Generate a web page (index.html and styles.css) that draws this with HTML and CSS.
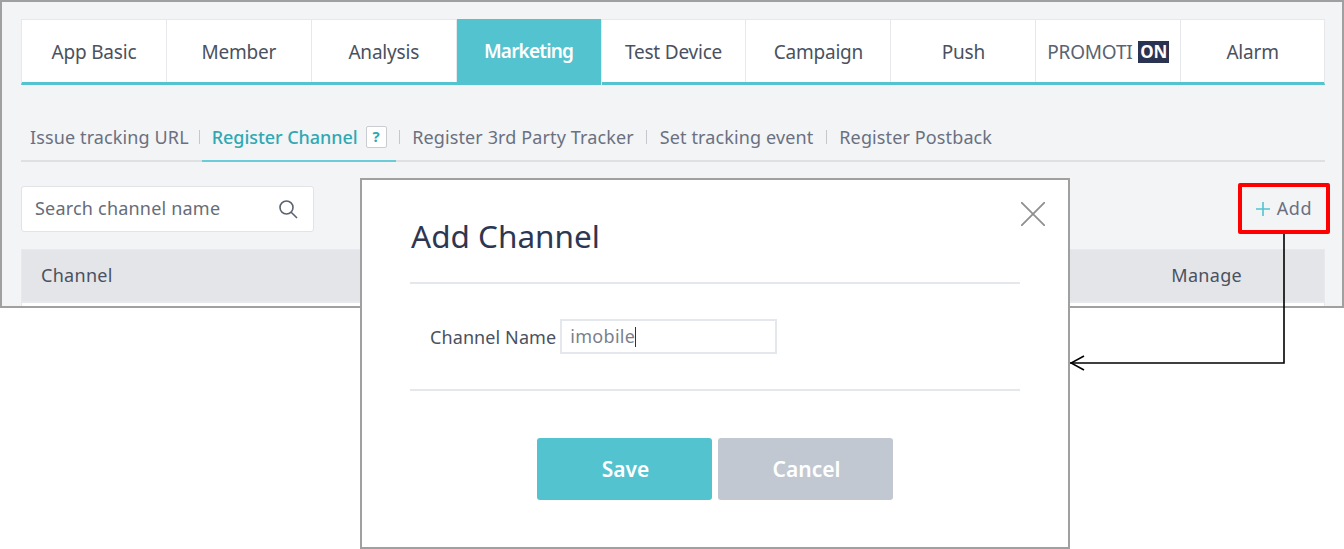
FILE: index.html
```html
<!DOCTYPE html>
<html lang="en">
<head>
    <meta charset="UTF-8">
    <title>Add Channel</title>
    <link rel="stylesheet" href="styles.css">
</head>
<body>
    <div class="shot">
        <ul class="tabs">
            <li>App Basic</li>
            <li>Member</li>
            <li>Analysis</li>
            <li class="on">Marketing</li>
            <li>Test Device</li>
            <li>Campaign</li>
            <li>Push</li>
            <li class="promo">PROMOTI <b>ON</b></li>
            <li>Alarm</li>
        </ul>
        <div class="subtabs">
            <a>Issue tracking URL</a>
            <i></i>
            <a class="on">Register Channel <span class="help">?</span></a>
            <i></i>
            <a>Register 3rd Party Tracker</a>
            <i></i>
            <a>Set tracking event</a>
            <i></i>
            <a>Register Postback</a>
        </div>
        <div class="tools">
            <div class="search">
                <span>Search channel name</span>
                <svg width="22" height="22" viewBox="0 0 22 22" fill="none" stroke="#5b6270" stroke-width="1.6">
                    <circle cx="9.5" cy="9.5" r="6.5"/>
                    <path d="M14.2 14.2L20 20"/>
                </svg>
            </div>
            <div class="add">
                <svg width="14" height="14" viewBox="0 0 14 14" stroke="#53c3cf" stroke-width="1.6">
                    <path d="M7 0V14M0 7H14"/>
                </svg>
                <span>Add</span>
            </div>
        </div>
        <div class="thead">
            <span>Channel</span>
            <span>Manage</span>
        </div>
        <div class="tbody"></div>
    </div>

    <div class="modal">
        <svg class="close" width="24" height="24" viewBox="0 0 24 24" stroke="#8f8f8f" stroke-width="1.8">
            <path d="M0 0L24 24M24 0L0 24"/>
        </svg>
        <h2>Add Channel</h2>
        <div class="field">
            <label>Channel Name</label>
            <div class="input">imobile<span class="caret"></span></div>
        </div>
        <div class="btns">
            <button class="save">Save</button>
            <button class="cancel">Cancel</button>
        </div>
    </div>

    <div class="redbox"></div>
    <svg class="arrow" width="224" height="140" viewBox="0 0 224 140" fill="none" stroke="#000" stroke-width="1.6">
        <path d="M214 0V129H0"/>
        <path d="M14 122L1 129L14 136"/>
    </svg>
</body>
</html>
```

FILE: styles.css
```css
* { box-sizing: border-box; }
html, body { margin: 0; }
body { position: relative; width: 1344px; height: 549px; overflow: hidden; background: #fff;
       font-family: "Noto Sans", sans-serif; color: #4a5160; }

.shot { height: 308px; padding: 17px 17px 0 19px; background: #f3f4f6; border: 2px solid #a0a0a0; overflow: hidden; }

.tabs { display: flex; height: 66px; margin: 0; padding: 0; list-style: none; background: #fff;
        border: 1px solid #e6e8ec; border-bottom: 3px solid #53c3cf; }
.tabs li { flex: 0 0 144.9px; display: flex; align-items: center; justify-content: center; padding-top: 2px; font-size: 19px;
           letter-spacing: -0.2px; border-right: 1px solid #e6e8ec; }
.tabs li:last-child { flex: 1 1 0; border-right: none; }
.tabs li.on { margin: -1px 0 -3px; padding: 0 0 3px; background: #53c3cf; color: #fff; font-weight: 600; letter-spacing: -0.8px; }
.tabs li.promo { color: #5b6270; gap: 1px; white-space: pre; }
.tabs li.promo b { padding: 0 2px; background: #2a3350; color: #fff; line-height: 22px; font-size: 17px; }

.subtabs { display: flex; align-items: center; height: 77px; padding: 29px 0 0 9px; margin-bottom: 24px;
           border-bottom: 2px solid #dfe0e4; font-size: 18px; color: #6a7080; letter-spacing: 0.12px; }
.subtabs i { width: 1px; height: 14px; margin: 0 12.5px; background: #c4c7cc; }
.subtabs a { white-space: nowrap; }
.subtabs a:first-child { margin-right: -2.5px; }
.subtabs a.on { display: flex; align-items: center; gap: 8px; height: 48px; margin: 0 -9.5px -2px -10.5px; padding: 0 9px 0 10px;
                color: #2fa8b4; font-weight: 500; letter-spacing: -0.05px; border-bottom: 2px solid #6accd6; }
.help { width: 21px; height: 22px; margin-bottom: 1px; border: 1px solid #c9ccd1; border-radius: 2px; background: #fff;
        font-size: 15px; font-weight: 700; line-height: 19px; text-align: center; }

.tools { display: flex; justify-content: space-between; height: 46px; margin-bottom: 17px; }
.search { display: flex; align-items: center; justify-content: space-between; width: 293px; padding: 0 14px 2px 13px;
          background: #fff; border: 1px solid #e1e3e7; border-radius: 3px; font-size: 18px; letter-spacing: 0.2px; color: #666c78; }
.search svg { margin-top: 2px; }
.add { display: flex; align-items: center; gap: 7px; padding: 0 13px 2px 0; font-size: 18px; letter-spacing: 0.5px; color: #6a7080; }
.add svg { margin-top: 2px; }

.thead { display: flex; justify-content: space-between; align-items: center; height: 53px; padding: 0 82px 2px 19px;
         background: #e4e5e9; border: 1px solid #e8e9ec; font-size: 18px; letter-spacing: 0.3px; }
.tbody { height: 10px; background: #fff; border: 1px solid #e8e9ec; }

.modal { position: absolute; left: 360px; top: 178px; width: 710px; height: 371px; padding: 0 48px;
         background: #fff; border: 2px solid #a0a0a0; }
.modal h2 { height: 104px; margin: 0; padding: 31px 0 0 1px; font-size: 31.5px; font-weight: 400; line-height: 50px;
            color: #2d3752; border-bottom: 2px solid #e4e7ec; }
.close { position: absolute; top: 22px; right: 23px; }
.field { display: flex; align-items: center; gap: 4px; height: 107px; padding-left: 20px; border-bottom: 2px solid #e4e7ec;
         font-size: 18px; letter-spacing: 0.1px; }
.input { width: 217px; height: 35px; padding-left: 8px; border: 2px solid #e4e7ec; font-size: 18px; letter-spacing: 0.3px; line-height: 31px; color: #7a7f8c; }
.caret { display: inline-block; width: 1px; height: 20px; background: #333; vertical-align: -4px; }
.btns { display: flex; justify-content: center; gap: 6px; margin-top: 47px; }
.btns button { width: 175px; height: 62px; padding-left: 8px; border: none; border-radius: 3px; font: 600 21px "Noto Sans", sans-serif;
               color: #fff; }
.save { background: #53c3cf; }
.cancel { background: #c1c8d2; }

.redbox { position: absolute; left: 1238px; top: 183px; width: 92px; height: 51px; border: 4px solid #f00; border-radius: 2px; }
.arrow { position: absolute; left: 1070px; top: 234px; }
```
